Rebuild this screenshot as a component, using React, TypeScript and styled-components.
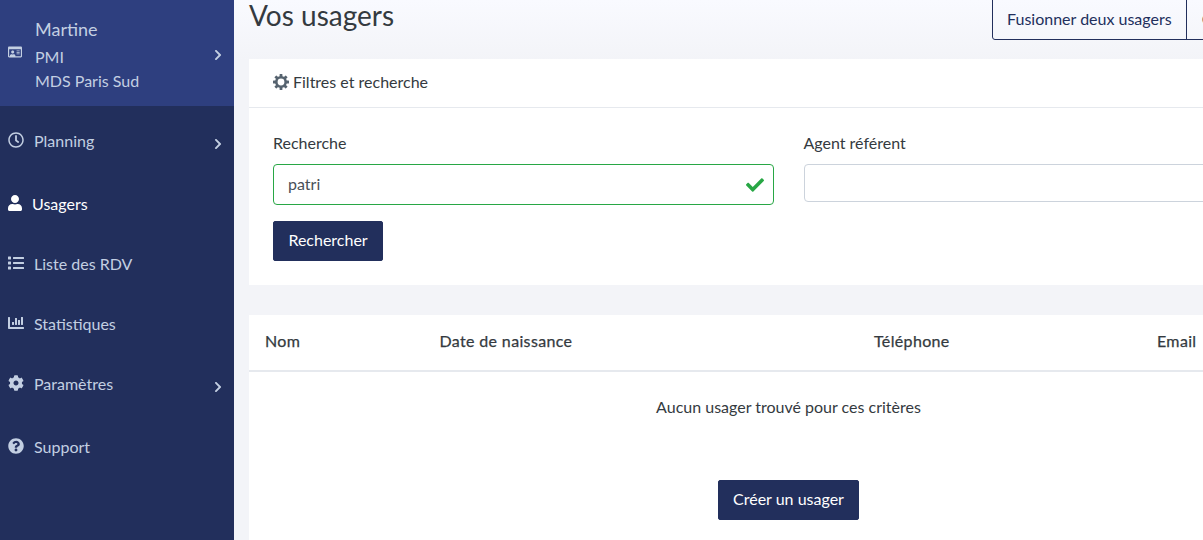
import React, { ReactElement } from 'react';
import styled, { createGlobalStyle } from 'styled-components';
import {
  FaChartBar,
  FaCheck,
  FaChevronRight,
  FaCog,
  FaList,
  FaQuestionCircle,
  FaRegClock,
  FaRegIdCard,
  FaUser,
} from 'react-icons/fa';

function UserIcon(): ReactElement {
  return <FaUser size={16} style={{ width: 14 }} />;
}

const navItems = [
  { label: 'Planning', icon: <FaRegClock size={16} />, arrow: true },
  { label: 'Usagers', icon: <UserIcon />, active: true },
  { label: 'Liste des RDV', icon: <FaList size={16} /> },
  { label: 'Statistiques', icon: <FaChartBar size={16} /> },
  { label: 'Paramètres', icon: <FaCog size={16} />, arrow: true },
  { label: 'Support', icon: <FaQuestionCircle size={16} /> },
];

// gear with a wide hole, the icon set only has the small hole version
const GearOutline = (): ReactElement => (
  <svg width="16" height="16" viewBox="0 0 16 16" fill="#56636f">
    <circle cx="8" cy="8" r="4.7" fill="none" stroke="#56636f" strokeWidth="2.6" />
    {[0, 45, 90, 135, 180, 225, 270, 315].map((a) => (
      <rect key={a} x="6.6" y="0" width="2.8" height="3" rx="0.5" transform={`rotate(${a} 8 8)`} />
    ))}
  </svg>
);

const App = (): ReactElement => {
  return (
    <Page>
      <GlobalStyle />
      <Sidebar>
        <Profile>
          <FaRegIdCard size={14} />
          <ProfileText>
            <ProfileName>Martine</ProfileName>
            <ProfileLine>PMI</ProfileLine>
            <ProfileLine>MDS Paris Sud</ProfileLine>
          </ProfileText>
          <Arrow $top={2}>
            <FaChevronRight size={12} />
          </Arrow>
        </Profile>
        <Nav>
          {navItems.map((item) => (
            <NavItem key={item.label} $active={item.active}>
              {item.icon}
              <span>{item.label}</span>
              {item.arrow && (
                <Arrow $top={4}>
                  <FaChevronRight size={12} />
                </Arrow>
              )}
            </NavItem>
          ))}
        </Nav>
      </Sidebar>
      <Main>
        <Header>
          <Title>Vos usagers</Title>
          <HeaderButtons>
            <OutlineButton>Fusionner deux usagers</OutlineButton>
            <OutlineButton>Créer un usager</OutlineButton>
          </HeaderButtons>
        </Header>
        <Card>
          <CardHeader>
            <GearOutline />
            <span>Filtres et recherche</span>
          </CardHeader>
          <FilterBody>
            <FormRow>
              <Field>
                <Label>Recherche</Label>
                <InputBox $valid>
                  patri
                  <FaCheck size={18} />
                </InputBox>
              </Field>
              <Field>
                <Label>Agent référent</Label>
                <InputBox />
              </Field>
            </FormRow>
            <SolidButton>Rechercher</SolidButton>
          </FilterBody>
        </Card>
        <TableCard>
          <TableHead>
            <span>Nom</span>
            <span>Date de naissance</span>
            <span>Téléphone</span>
            <span>Email</span>
          </TableHead>
          <EmptyText>Aucun usager trouvé pour ces critères</EmptyText>
          <CreateRow>
            <SolidButton>Créer un usager</SolidButton>
          </CreateRow>
        </TableCard>
      </Main>
    </Page>
  );
};

const GlobalStyle = createGlobalStyle`
  html, body {
    margin: 0;
    height: 540px;
    overflow: hidden;
    font-family: Lato, "Liberation Sans", sans-serif;
    font-size: 16px;
    color: #343a40;
  }
`;

const Page = styled.div`
  display: flex;
  width: 1203px;
  height: 540px;
  overflow: hidden;
`;

const Sidebar = styled.aside`
  flex: 0 0 234px;
  background-color: #222f5c;
  color: #c3cfe2;
`;

const Profile = styled.div`
  height: 106px;
  box-sizing: border-box;
  padding: 0 8px;
  display: flex;
  align-items: center;
  gap: 13px;
  position: relative;
  background-color: #2e3f7f;

  > svg {
    margin-top: -2px;
  }
`;

const ProfileText = styled.div`
  display: flex;
  flex-direction: column;
  gap: 3px;
  margin-top: -1px;
`;

const ProfileName = styled.div`
  font-size: 18px;
  line-height: 28px;
`;

const ProfileLine = styled.div`
  line-height: 21px;
`;

const Arrow = styled.span<{ $top: number }>`
  position: absolute;
  right: 10px;
  top: calc(50% + ${(p) => p.$top}px);
  transform: translateY(-50%);
  display: flex;
`;

const Nav = styled.nav`
  padding-top: 4px;
  display: flex;
  flex-direction: column;
`;

const NavItem = styled.div<{ $active?: boolean }>`
  height: 60px;
  padding: 0 8px;
  display: flex;
  align-items: center;
  gap: 10px;
  position: relative;
  color: ${(p) => (p.$active ? '#ffffff' : '#c3cfe2')};

  &:nth-child(1),
  &:nth-child(5) {
    margin-bottom: 3px;
  }
`;

const Main = styled.main`
  flex: 0 0 1095px;
  padding: 0 0 0 15px;
  box-sizing: border-box;
  background: linear-gradient(#f9faff, #f3f4f8 60px);
`;

const Header = styled.div`
  width: 1079px;
  height: 59px;
  display: flex;
  justify-content: space-between;
  align-items: flex-start;
`;

const Title = styled.h1`
  margin: 0;
  font-size: 28px;
  font-weight: 400;
  line-height: 30px;
  color: #343a40;
`;

const HeaderButtons = styled.div`
  display: flex;
  margin-top: -4px;
`;

const OutlineButton = styled.button`
  height: 44px;
  padding: 1px 14.5px 0;
  border: 1px solid #222f5c;
  border-radius: 3px 0 0 3px;
  background: transparent;
  color: #222f5c;
  font-family: inherit;
  font-size: 16px;

  & + & {
    margin-left: -1px;
    border-radius: 0;
  }
`;

const Card = styled.section`
  width: 1079px;
  background-color: #ffffff;
`;

const CardHeader = styled.div`
  height: 49px;
  padding: 0 24px 3px;
  box-sizing: border-box;
  display: flex;
  align-items: center;
  gap: 4px;
  border-bottom: 1px solid #e6e9ee;
`;

const FilterBody = styled.div`
  padding: 25px 24px 24px;
`;

const FormRow = styled.div`
  display: grid;
  grid-template-columns: 1fr 1fr;
  column-gap: 30px;
`;

const Field = styled.div`
  margin-bottom: 16px;
`;

const Label = styled.div`
  line-height: 20px;
  margin-bottom: 11px;
`;

const InputBox = styled.div<{ $valid?: boolean }>`
  height: ${(p) => (p.$valid ? '41px' : '38px')};
  box-sizing: border-box;
  padding: 0 14px 2px;
  display: flex;
  align-items: center;
  justify-content: space-between;
  border: 1px solid ${(p) => (p.$valid ? '#28a745' : '#ccd3dc')};
  border-radius: 4px;
  color: #495057;

  svg {
    color: #28a745;
    margin-right: -5px;
    margin-top: 2px;
  }
`;

const SolidButton = styled.button`
  height: 40px;
  padding: 0 14.4px 3px;
  border: 1px solid #222f5c;
  border-radius: 2px;
  background-color: #222f5c;
  color: #ffffff;
  font-family: inherit;
  font-size: 16px;
`;

const TableCard = styled.section`
  width: 1079px;
  margin-top: 30px;
  height: 300px;
  background-color: #ffffff;
`;

const TableHead = styled.div`
  height: 57px;
  box-sizing: border-box;
  display: grid;
  grid-template-columns: 174.5px 434.5px 283px 1fr;
  align-items: center;
  padding: 0 16px 5px;
  border-bottom: 2px solid #e6e9ee;
  font-size: 16px;
  letter-spacing: 0.35px;
  font-weight: 400;
  -webkit-text-stroke: 0.25px #343a40;
  color: #343a40;
`;

const EmptyText = styled.div`
  margin-top: 25px;
  line-height: 20px;
  text-align: center;
`;

const CreateRow = styled.div`
  margin-top: 63px;
  display: flex;
  justify-content: center;
`;

export default App;
